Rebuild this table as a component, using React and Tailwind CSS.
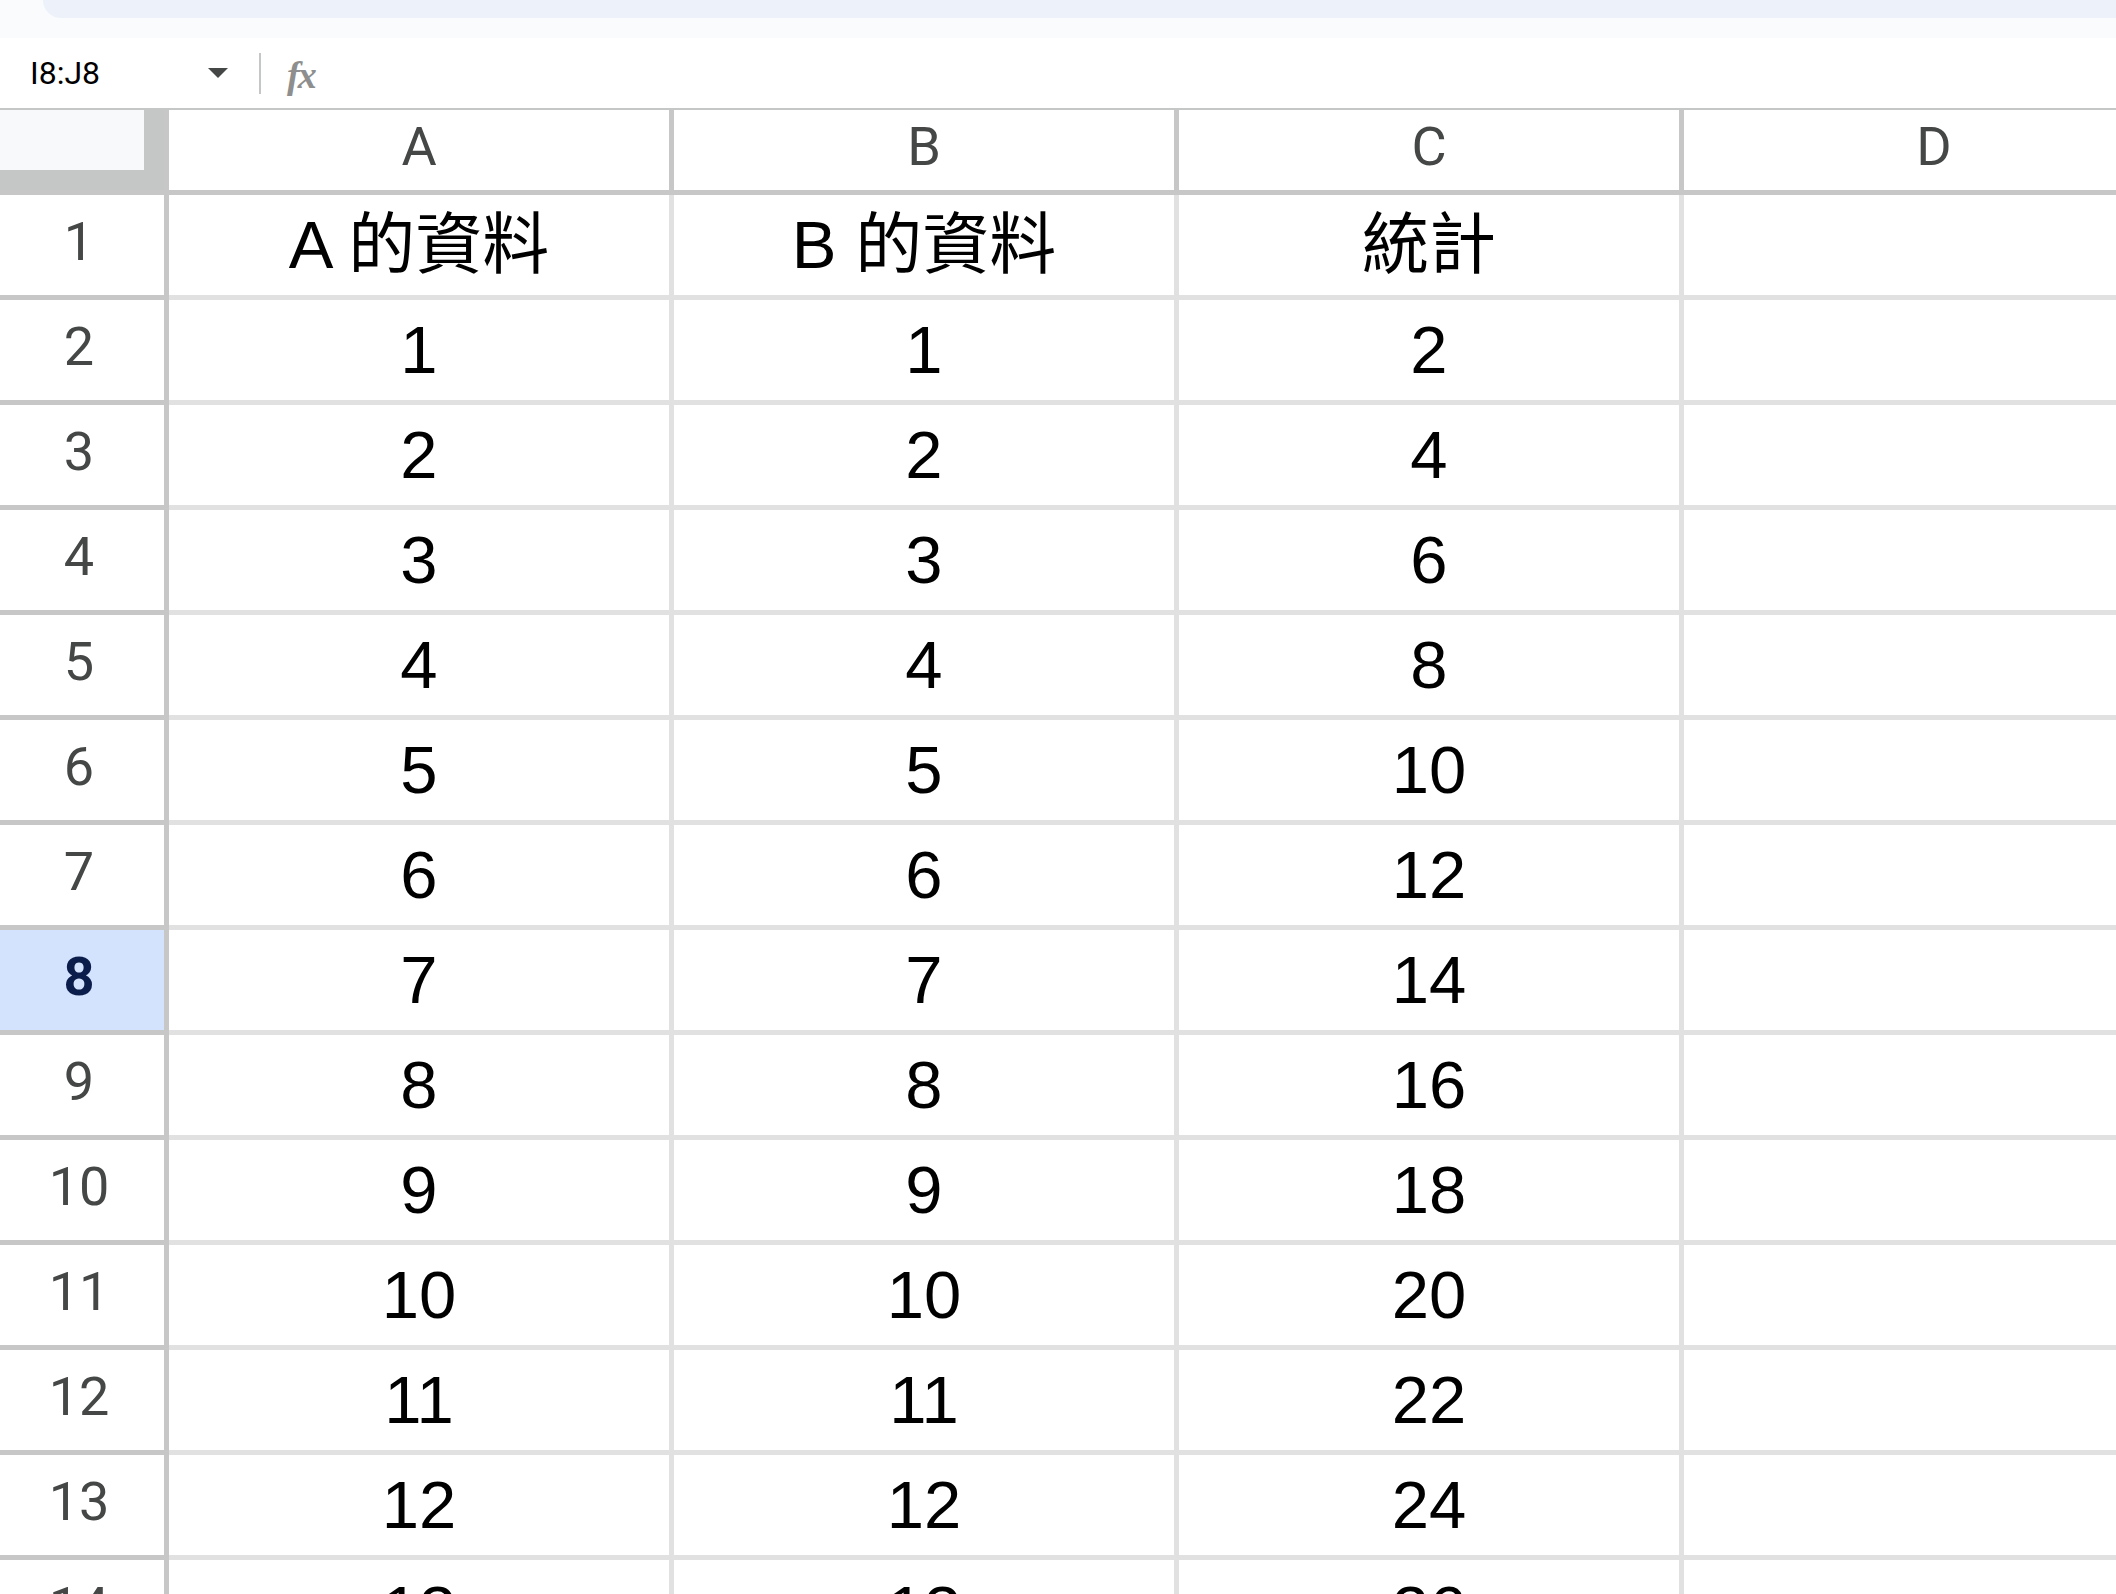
const columns = ["A", "B", "C", "D"];

const rows = [
  ["A 的資料", "B 的資料", "統計", ""],
  ...Array.from({ length: 13 }, (_, i) => [String(i + 1), String(i + 1), String((i + 1) * 2), ""]),
];

export default function App() {
  return (
    <div className="w-[2116px] h-[1594px] overflow-hidden bg-white">
      {/* toolbar edge */}
      <div className="h-[38px] bg-[#f9fbfd]">
        <div className="ml-[43px] h-[18px] bg-[#edf2fa] rounded-bl-[22px]"></div>
      </div>

      {/* formula bar */}
      <div className="h-[72px] flex items-center border-b-2 border-[#c4c7c5] bg-white">
        <div className="w-[190px] pl-[30px] text-[32px] leading-none text-black font-['Roboto',sans-serif]">
          I8:J8
        </div>
        <svg width="20" height="10" viewBox="0 0 20 10" className="ml-[18px]">
          <path d="M0 0 L20 0 L10 10 Z" fill="#444746" />
        </svg>
        <div className="ml-[31px] w-[2px] h-[41px] bg-[#c4c7c5]"></div>
        <div className="ml-[26px] pt-[4px] text-[38px] italic font-bold text-[#8e8e8e] font-['Liberation_Serif',serif] leading-none tracking-[-2px]">
          fx
        </div>
      </div>

      {/* column headers */}
      <div className="flex h-[85px]">
        <div className="w-[169px] shrink-0 border-r-[5px] border-b-[5px] border-[#c7c7c7] bg-[#c4c7c5]">
          <div className="w-[144px] h-[60px] bg-[#f8f9fa]"></div>
        </div>
        {columns.map((c) => (
          <div
            key={c}
            className="w-[505px] shrink-0 border-r-[5px] border-b-[5px] border-[#c7c7c7] flex items-center justify-center pb-[8px] text-[54px] text-[#444746] font-['Roboto',sans-serif]"
          >
            {c}
          </div>
        ))}
      </div>

      {/* data rows */}
      {rows.map((row, i) => {
        const selected = i + 1 === 8;
        return (
          <div key={i} className="flex h-[105px]">
            <div
              className={
                selected
                  ? "w-[169px] shrink-0 border-r-[5px] border-b-[5px] border-[#c7c7c7] bg-[#d3e3fd] flex items-center justify-center pb-[8px] pr-[6px] text-[54px] font-bold text-[#0b1d4a] font-['Roboto',sans-serif]"
                  : "w-[169px] shrink-0 border-r-[5px] border-b-[5px] border-[#c7c7c7] bg-white flex items-center justify-center pb-[8px] pr-[6px] text-[54px] text-[#444746] font-['Roboto',sans-serif]"
              }
            >
              {i + 1}
            </div>
            {row.map((v, j) => (
              <div
                key={j}
                className="w-[505px] shrink-0 border-r-[5px] border-b-[5px] border-[#e1e1e1] flex items-center justify-center text-[67px] text-black font-['Liberation_Sans','Noto_Sans_CJK_TC',sans-serif]"
              >
                {v}
              </div>
            ))}
          </div>
        );
      })}
    </div>
  );
}
